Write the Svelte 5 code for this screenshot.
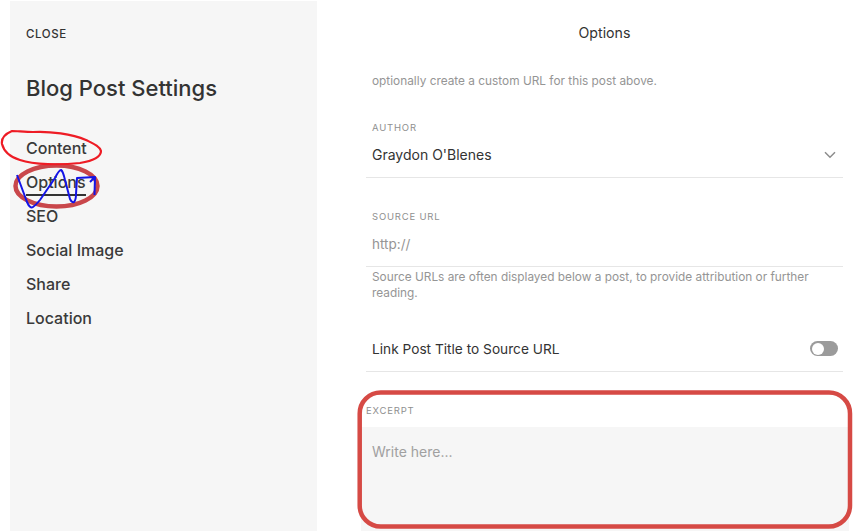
<script>
  const nav = ['Content', 'Options', 'SEO', 'Social Image', 'Share', 'Location'];
</script>

<div class="page">
  <aside class="side">
    <div class="close">CLOSE</div>
    <h1>Blog Post Settings</h1>
    <nav>
      {#each nav as item}
        <div class="nav-item"><span class:active={item === 'Options'}>{item}</span></div>
      {/each}
    </nav>
  </aside>

  <main class="main">
    <h2>Options</h2>
    <p class="hint first">optionally create a custom URL for this post above.</p>

    <section class="field author">
      <div class="label">AUTHOR</div>
      <div class="row">
        <span class="value">Graydon O'Blenes</span>
        <svg class="chev" width="12" height="8" viewBox="0 0 12 8"><path d="M1 1.2 L6 6.2 L11 1.2" fill="none" stroke="#8c8c8c" stroke-width="1.5"/></svg>
      </div>
    </section>

    <section class="field source">
      <div class="label">SOURCE URL</div>
      <div class="row"><span class="placeholder">http://</span></div>
      <p class="hint">Source URLs are often displayed below a post, to provide attribution or further reading.</p>
    </section>

    <div class="row toggle-row">
      <span class="value link">Link Post Title to Source URL</span>
      <span class="toggle"><span class="knob"></span></span>
    </div>

    <section class="excerpt">
      <div class="label">EXCERPT</div>
      <div class="area">Write here...</div>
    </section>
  </main>

  <svg class="ink" width="867" height="531" viewBox="0 0 867 531">
    <rect x="359.7" y="392.5" width="490.3" height="134" rx="21" fill="none" stroke="#d64a45" stroke-width="4.5"/>
    <ellipse cx="56.5" cy="186" rx="41" ry="20.5" fill="none" stroke="#c9474b" stroke-width="4.5"/>
    <path d="M12 131 C5 134 1 138 2 144 C4 152 10 157 20 160 C34 165 60 165 80 163 C92 161 101 157 101 151 C100 146 92 143 86 140 C72 134 50 131 33 132 C25 132 17 131 12 131 Z" fill="none" stroke="#ee1c25" stroke-width="2.2"/>
    <path d="M17 175 L27 202 Q30 209 33 207 Q36 205 40 200 L55 178 Q59 170 61 170 Q63 171 65 180 L70 199 Q72 203 74 202 Q76 200 76 194 L77 178 L95 177 L94.5 195 M90 182 L95 177" fill="none" stroke="#1414e6" stroke-width="2" stroke-linejoin="round"/>
  </svg>
</div>

<style>
  :global(body) { margin: 0; background: #fff; }
  .page {
    position: relative;
    display: flex;
    width: 867px;
    height: 531px;
    overflow: hidden;
    background: #fff;
    font-family: Inter, "Liberation Sans", sans-serif;
    color: #333;
  }
  .side {
    box-sizing: border-box;
    flex: none;
    width: 307px;
    margin: 1px 0 0 10px;
    padding: 26px 16px 0;
    background: #f6f6f6;
  }
  .close { font-size: 11.5px; line-height: 14px; letter-spacing: 0.6px; font-weight: 500; color: #333; }
  h1 { margin: 32px 0 0; font-size: 22px; line-height: 30px; font-weight: 500; color: #333; }
  nav { margin-top: 35px; }
  .nav-item { height: 34px; font-size: 16px; line-height: 20px; font-weight: 500; color: #3a3a3a; }
  .nav-item span { display: inline-block; padding-bottom: 2px; }
  .nav-item span.active { border-bottom: 2px solid #333; }
  .main { flex: none; width: 477px; margin-left: 49px; padding-top: 24px; }
  h2 { margin: 0; font-size: 14.2px; line-height: 18px; font-weight: 400; text-align: center; color: #333; }
  .hint { margin: 0; padding: 0 6px; font-size: 11.85px; line-height: 16px; color: #959595; }
  .hint.first { margin-top: 31px; }
  .label { padding-left: 6px; font-size: 9.5px; line-height: 12px; letter-spacing: 0.8px; color: #8f8f8f; }
  .row {
    box-sizing: border-box;
    display: flex;
    align-items: center;
    justify-content: space-between;
    padding: 0 7px 4px 6px;
    border-bottom: 1px solid #e6e6e6;
  }
  .value { font-size: 14px; line-height: 18px; color: #333; }
  .value.link { font-size: 13.7px; }
  .placeholder { font-size: 13.5px; line-height: 18px; color: #959595; }
  .author { margin-top: 33px; }
  .author .row { height: 41px; margin-top: 3px; }
  .source { margin-top: 33px; }
  .source .row { height: 41px; margin-top: 3px; }
  .source .hint { margin-top: 2px; }
  .toggle-row { height: 50px; margin-top: 21px; padding-top: 4px; padding-bottom: 0; padding-right: 5px; }
  .toggle { display: block; width: 28px; height: 15px; border-radius: 8px; background: #9b9b9b; position: relative; }
  .knob { position: absolute; left: 1.5px; top: 1.5px; width: 12px; height: 12px; border-radius: 50%; background: #fff; }
  .excerpt { width: 488px; margin: 33px 0 0 -5px; }
  .excerpt .label { padding-left: 5px; }
  .area { box-sizing: border-box; height: 104px; margin-top: 10px; padding: 16px 10px 16px 11px; background: #f6f6f6; font-size: 14px; line-height: 18px; color: #a0a0a0; }
  .ink { position: absolute; left: 0; top: 0; pointer-events: none; }
</style>
